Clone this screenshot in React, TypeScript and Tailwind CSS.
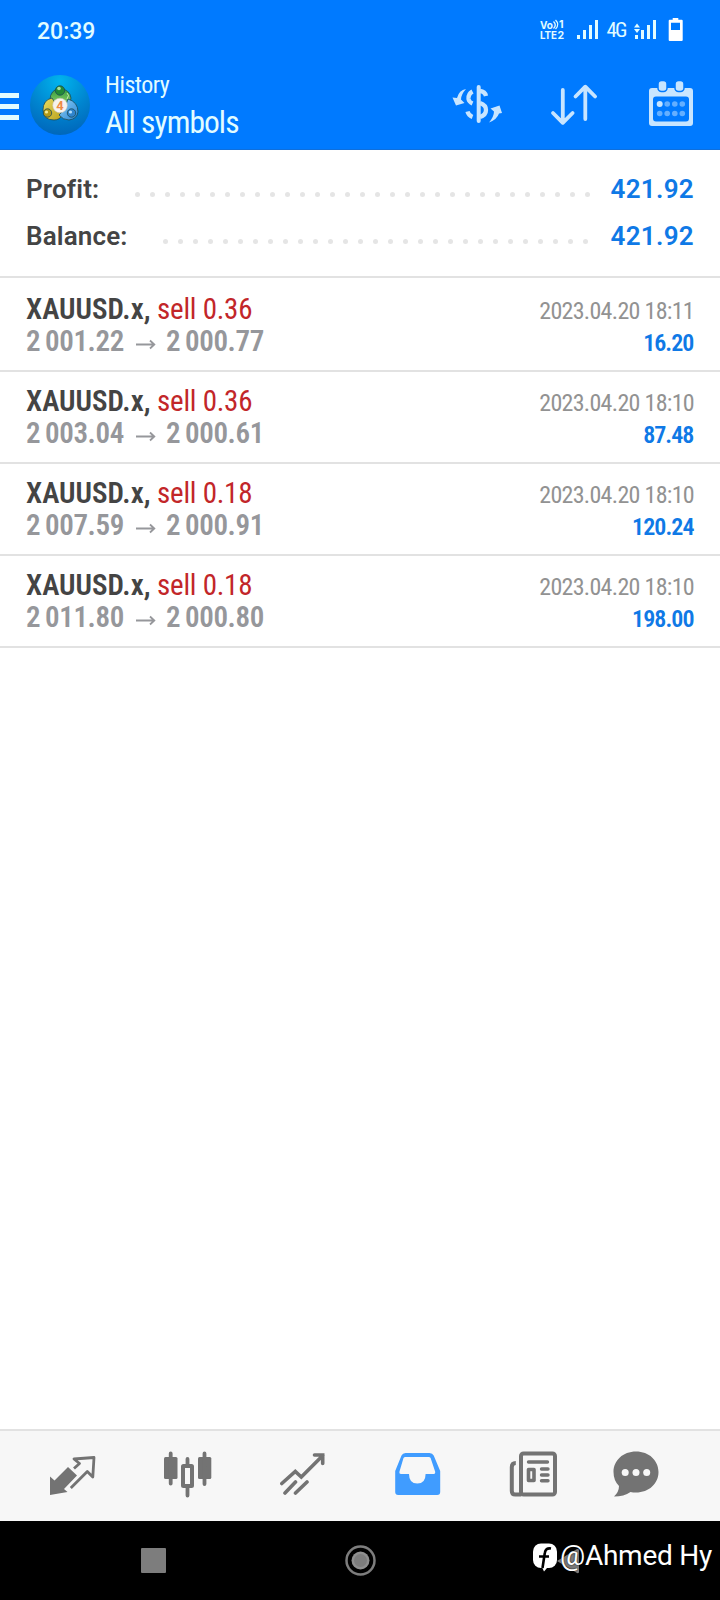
interface IDeal {
  symbol: string;
  action: string;
  open: string;
  close: string;
  time: string;
  profit: string;
}

const deals: IDeal[] = [
  { symbol: 'XAUUSD.x,', action: 'sell 0.36', open: '2 001.22', close: '2 000.77', time: '2023.04.20 18:11', profit: '16.20' },
  { symbol: 'XAUUSD.x,', action: 'sell 0.36', open: '2 003.04', close: '2 000.61', time: '2023.04.20 18:10', profit: '87.48' },
  { symbol: 'XAUUSD.x,', action: 'sell 0.18', open: '2 007.59', close: '2 000.91', time: '2023.04.20 18:10', profit: '120.24' },
  { symbol: 'XAUUSD.x,', action: 'sell 0.18', open: '2 011.80', close: '2 000.80', time: '2023.04.20 18:10', profit: '198.00' },
];

const StatusBar = () => (
  <div className="flex h-[62px] items-center justify-between pr-[37px] pl-[37px] text-[#e2fcff]">
    <span className="pt-[2px] text-[23px] leading-7 font-medium">20:39</span>
    <svg width="144" height="30" viewBox="539 16 144 30" fill="currentColor">
      <g fontFamily="Inter, sans-serif" fontWeight="700">
        <text x="540" y="28.500" fontSize="10.500" textLength="13" lengthAdjust="spacingAndGlyphs">Vo</text>
        <text x="559" y="28" fontSize="10.500">1</text>
        <text x="540" y="39" fontSize="10.800" textLength="17" lengthAdjust="spacingAndGlyphs">LTE</text>
        <text x="557.500" y="39" fontSize="10.500">2</text>
      </g>
      <path d="M553.500 21.500q3.500 3.500 0 7M555.500 20q4.500 4.500 0 9" fill="none" stroke="currentColor" strokeWidth="1.300" />
      <path d="M577 35h3v4h-3zM583 30h3v9h-3zM589 25h3v14h-3zM595 20h3v19h-3z" />
      <text x="606.500" y="37" fontSize="21" fontWeight="400" textLength="21" fontFamily="Roboto Condensed">4G</text>
      <path d="M635 35h3v4h-3zM641 30h3v9h-3zM647 25h3v14h-3zM653 20h3v19h-3zM634 27.500h6l-3-4zM634 29h6l-3 4z" />
      <path fillRule="evenodd" d="M672.700 18h5.600v1.700h3.400q1 0 1 1V40q0 1-1 1h-12q-1 0-1-1V20.700q0-1 1-1h3zM671 22.700V30h9v-7.300z" fill="#fff" />
    </svg>
  </div>
);

const Logo = () => (
  <svg width="60" height="60" viewBox="0 0 60 60">
    <defs>
      <radialGradient id="disc" cx="0.5" cy="0.1" r="0.95">
        <stop offset="0" stopColor="#00b4ee" />
        <stop offset="0.55" stopColor="#0084cf" />
        <stop offset="1" stopColor="#0063b8" />
      </radialGradient>
      <linearGradient id="green" x1="0" y1="0" x2="0" y2="1">
        <stop offset="0" stopColor="#2f9a3c" />
        <stop offset="1" stopColor="#8ccf6a" />
      </linearGradient>
      <linearGradient id="gold" x1="0" y1="0" x2="1" y2="1">
        <stop offset="0" stopColor="#e9dc62" />
        <stop offset="1" stopColor="#b9a21c" />
      </linearGradient>
      <linearGradient id="sky" x1="0" y1="0" x2="1" y2="1">
        <stop offset="0" stopColor="#8fd0f8" />
        <stop offset="1" stopColor="#2a86d4" />
      </linearGradient>
    </defs>
    <circle cx="30" cy="30" r="30" fill="url(#disc)" />
    <g stroke="#1c4a55" strokeWidth="0.8">
      <path d="M30 13q-10 2-10 12 0 3 2 5h16q3-3 3-7-1-8-11-10z" fill="url(#green)" />
      <path d="M22 23q-9 2-9 12 0 10 11 10 6 0 8-5l-3-6z" fill="url(#gold)" />
      <path d="M38 24q10 3 10 13-1 7-9 8-6 0-10-5l5-5z" fill="url(#sky)" />
      <path d="M37 24q3-4 0-6" fill="none" stroke="#d9f3c2" />
      <circle cx="30" cy="15.500" r="4.700" fill="#238a37" />
      <circle cx="17.500" cy="38" r="4.200" fill="#b39a17" />
      <circle cx="41.500" cy="38" r="4.200" fill="#2f84cd" />
    </g>
    <circle cx="29" cy="13.500" r="1.800" fill="#a9e09a" />
    <circle cx="16.500" cy="37" r="1.600" fill="#f4eb96" />
    <circle cx="40.500" cy="37" r="1.600" fill="#b4defb" />
    <circle cx="30" cy="30.500" r="7.300" fill="#f6f3ee" stroke="#c8c3b4" strokeWidth="0.500" />
    <text x="30" y="35" fontSize="13" fontWeight="700" fontFamily="Roboto" textAnchor="middle" fill="#ef8a45">4</text>
  </svg>
);

const AppBar = () => (
  <div className="flex h-[86px] items-center pr-[26px]">
    <div className="mt-[3px] flex w-[19px] flex-col gap-[6px]">
      <span className="h-[5px] bg-[#e2fcff]" />
      <span className="h-[5px] bg-[#e2fcff]" />
      <span className="h-[5px] bg-[#e2fcff]" />
    </div>
    <div className="ml-[11px]">
      <Logo />
    </div>
    <div className="ml-[15px] flex-1 pt-1 font-['Roboto_Condensed'] text-[#e2fcff]">
      <p className="text-[24px] leading-8 tracking-[-0.5px]">History</p>
      <p className="text-[31.5px] leading-[44px] tracking-[-0.95px]">All symbols</p>
    </div>
    <div className="flex items-center text-[#c8e5ff]">
      <svg width="52" height="50" viewBox="451 80 52 50" fill="none" stroke="currentColor" strokeWidth="4" strokeLinecap="round">
        <path d="M478.700 87v34" />
        <path d="M472.500 91.500q-4.500 2.500-4 7.500.5 3 4 4.500M467.500 111.500q1 4 5 5.500M480 91q5 .5 6 5M480 103q6 2 6 7t-6 7" strokeWidth="4.300" strokeLinecap="butt" />
        <path d="M466 89q-7 1-9 9l-4.500-.5 3.500 8 8.500-2.500-3.500-3.500q0-5 5-10.500zM489 122.500q8-3 10-9l3-.5-2.500-7.500-9 3 3.500 3q0 5-5 11z" fill="currentColor" stroke="none" />
      </svg>
      <svg className="ml-[47px]" width="48" height="50" viewBox="550 80 48 50" fill="none" stroke="currentColor" strokeWidth="3.800" strokeLinecap="round" strokeLinejoin="round">
        <path d="M562.800 90v32.500M553 113l9.800 9.800 9.800-9.800M585.300 119V87M575.500 96.500l9.800-9.800 9.800 9.800" />
      </svg>
      <svg className="ml-[50px]" width="46" height="50" viewBox="648 80 46 50" fill="currentColor">
        <path fillRule="evenodd" d="M652 88h38q3 0 3 3v32q0 3-3 3h-38q-3 0-3-3V91q0-3 3-3zM656 96.500q-3 0-3 3v19q0 3 3 3h30q3 0 3-3v-19q0-3-3-3z" />
        <rect x="658" y="80.500" width="9" height="11" rx="3.500" stroke="#007aff" strokeWidth="1.500" />
        <rect x="675" y="80.500" width="9" height="11" rx="3.500" stroke="#007aff" strokeWidth="1.500" />
        <circle cx="659.700" cy="104" r="3" />
        <g opacity="0.5">
          <circle cx="667.200" cy="104" r="2.800" />
          <circle cx="674.800" cy="104" r="2.800" />
          <circle cx="682.300" cy="104" r="2.800" />
          <circle cx="659.700" cy="113.500" r="2.800" />
          <circle cx="667.200" cy="113.500" r="2.800" />
          <circle cx="674.800" cy="113.500" r="2.800" />
          <circle cx="682.300" cy="113.500" r="2.800" />
        </g>
      </svg>
    </div>
  </div>
);

const Dots = ({ count }: { count: number }) => (
  <div className="mt-[10px] flex gap-[10px]">
    {Array.from({ length: count }, (_, i) => (
      <span key={i} className="size-[5px] rounded-full bg-[#e5e5e5]" />
    ))}
  </div>
);

const SummaryLine = ({ label, value, dots }: { label: string; value: string; dots: number }) => (
  <div className="flex h-[47px] items-center text-[26px]">
    <span className="flex-1 font-semibold tracking-[0.15px] text-[#444]">{label}</span>
    <Dots count={dots} />
    <span className={`w-[104px] text-right font-semibold text-[#0f79e6] tracking-[0.3px] ${dots === 31 ? '' : 'ml-[2px]'}`}>{value}</span>
  </div>
);

const DealRow = ({ ...deal }: IDeal) => (
  <div className="flex h-[92px] justify-between border-b-2 border-[#e2e2e2] px-[26px] pt-[13px] font-['Roboto_Condensed'] leading-8">
    <div className="text-[29px]">
      <p>
        <span className="font-semibold text-[#444]">{deal.symbol}</span>{' '}
        <span className="tracking-[-0.25px] text-[#c22629]">{deal.action}</span>
      </p>
      <p className="flex font-semibold tracking-[-0.4px] text-[#96979b] [word-spacing:-1.4px]">
        <span className="w-[110px]">{deal.open}</span>
        <svg className="mt-3 mr-[10px]" width="20" height="16" viewBox="0 0 20 16" fill="none" stroke="currentColor" strokeWidth="1.800">
          <path d="M0 7.500h18M14 3.500l4.300 4-4.300 4" />
        </svg>
        <span>{deal.close}</span>
      </p>
    </div>
    <div className="pt-[2px] text-right text-[24px]">
      <p className="tracking-[-0.7px] text-[#929292]">{deal.time}</p>
      <p className="mr-[0.5px] font-semibold tracking-[-0.95px] text-[#0f79e6]">{deal.profit}</p>
    </div>
  </div>
);

const TabBar = () => (
  <div className="flex h-[92px] items-center border-t-2 border-[#e2e2e2] bg-[#f7f7f7] pb-1 pl-[48px] text-[#737373]">
    <svg width="48" height="50" viewBox="48 1449 48 50" fill="none" stroke="currentColor" strokeWidth="2.800" strokeLinejoin="round">
      <path d="M50 1476.500l4.500 4 13.500-13.500 9 8.500-13 13.500 3.500 3-17.500 3z" fill="currentColor" stroke="none" />
      <path d="M74 1468.500l5.500-5-5.500-4.500 20-1.500-1.200 19.500-5.500-5.500-16.500 16.500" />
    </svg>
    <svg className="ml-[67px]" width="50" height="50" viewBox="163 1449 50 50" fill="currentColor">
      <rect x="164" y="1457" width="13.500" height="22" rx="1.500" />
      <rect x="198" y="1457" width="13.300" height="22" rx="1.500" />
      <rect x="183" y="1466" width="9" height="20" rx="0.500" fill="none" stroke="currentColor" strokeWidth="4" />
      <path d="M170.700 1453.500v30M204.500 1453.500v30.500M187.500 1459v6M187.500 1487v8.500" stroke="currentColor" strokeWidth="3.800" strokeLinecap="round" />
    </svg>
    <svg className="ml-[67px]" width="46" height="50" viewBox="280 1449 46 50" fill="none" stroke="currentColor" strokeWidth="3.600" strokeLinecap="round">
      <path d="M281.800 1483.500l13.500-12 6 5.500 21.500-21.500M314.500 1455h8.200v8.500M285 1493l10.500-11M295.500 1493l11.500-11" />
    </svg>
    <svg className="ml-[68px]" width="47" height="50" viewBox="394 1449 47 50" fill="#409cff">
      <path fillRule="evenodd" d="M405.500 1453h24q3 0 4.200 2.500l6.500 15.500v21q0 3-3 3h-39q-3 0-3-3v-21l6.300-15.500q1.200-2.500 4-2.500zM405.500 1457q-1.500 0-2 1l-4 13.500q-.5 2.500 1.500 2.500h8q0 9.500 8.300 9.500t8.300-9.500h8q2 0 1.500-2.500l-4.500-13.500q-.5-1-2-1z" />
    </svg>
    <svg className="ml-[68px]" width="48" height="50" viewBox="509 1449 48 50" fill="none" stroke="currentColor" strokeWidth="4">
      <rect x="521" y="1453.500" width="34" height="41" rx="2.500" />
      <path d="M515.800 1463q-4 0-4 4v24q0 3.500 3.500 3.500h6" />
      <path d="M528.500 1462h19M541.500 1469h6.500M541.500 1475h6.500M541.500 1480.700h6.500" strokeWidth="3.400" strokeLinecap="round" />
      <rect x="528.500" y="1469.500" width="5.500" height="11" strokeWidth="3.600" strokeLinejoin="round" />
    </svg>
    <svg className="ml-[56px]" width="47" height="50" viewBox="613 1449 47 50" fill="currentColor">
      <path d="M636 1451.500c13 0 22.500 9 22.500 20.500s-9.500 20.500-22.500 20.500q-3 0-5.500-.5-6.500 4.500-16.500 4.500 5-4.500 5-10.500-5.500-5.500-5.500-14c0-11.500 9.500-20.500 22.500-20.500z" />
      <g fill="#f7f7f7">
        <circle cx="625.200" cy="1472.500" r="3.500" />
        <circle cx="636" cy="1472.500" r="3.500" />
        <circle cx="646.700" cy="1472.500" r="3.500" />
      </g>
    </svg>
  </div>
);

const SystemNav = () => (
  <div className="relative flex h-[79px] items-center bg-black pl-[141px]">
    <span className="size-[25px] rounded-[1px] bg-[#7d7d7d]" />
    <svg className="ml-[179px]" width="31" height="31" viewBox="0 0 31 31">
      <circle cx="15.500" cy="15.500" r="14" fill="none" stroke="#7d7d7d" strokeWidth="2.500" />
      <circle cx="15.500" cy="15.500" r="9" fill="#8f8f8f" />
      <circle cx="15.500" cy="15.500" r="6.500" fill="#7d7d7d" />
    </svg>
    <svg className="ml-[181px]" width="22" height="26" viewBox="0 0 22 26">
      <path d="M0 13L20 1q2-.5 2 1v22q0 1.500-2 1z" fill="#7d7d7d" />
    </svg>
    <div className="absolute top-[17px] left-[532px] flex text-white">
      <svg className="mt-[5px] mr-[2px]" width="26" height="30" viewBox="0 0 26 30">
        <rect x="1" y="0.500" width="24" height="24.500" rx="8" fill="#fff" />
        <path d="M12 28.500l3-3.500-1-3h-5z" fill="#fff" />
        <path d="M19 5.500q-5.500-1-6.200 4.500L10.500 25M7 13.500h10" fill="none" stroke="#000" strokeWidth="2.600" />
      </svg>
      <span className="text-[28px] leading-9 tracking-[-0.25px] whitespace-nowrap [text-shadow:0_0_2px_#000]">@Ahmed Hy</span>
    </div>
  </div>
);

export default function App() {
  return (
    <div className="flex h-[1600px] w-[720px] flex-col overflow-hidden bg-white font-['Roboto',sans-serif]">
      <header className="h-[150px] border-b border-[#0f6fdc] bg-[#007aff]">
        <StatusBar />
        <AppBar />
      </header>
      <section className="h-[128px] border-b-2 border-[#e2e2e2] px-[26px] pt-4">
        <SummaryLine label="Profit:" value="421.92" dots={31} />
        <SummaryLine label="Balance:" value="421.92" dots={29} />
      </section>
      <main className="flex-1 pt-[2px]">
        {deals.map((deal) => (
          <DealRow key={deal.open} {...deal} />
        ))}
      </main>
      <TabBar />
      <SystemNav />
    </div>
  );
}
